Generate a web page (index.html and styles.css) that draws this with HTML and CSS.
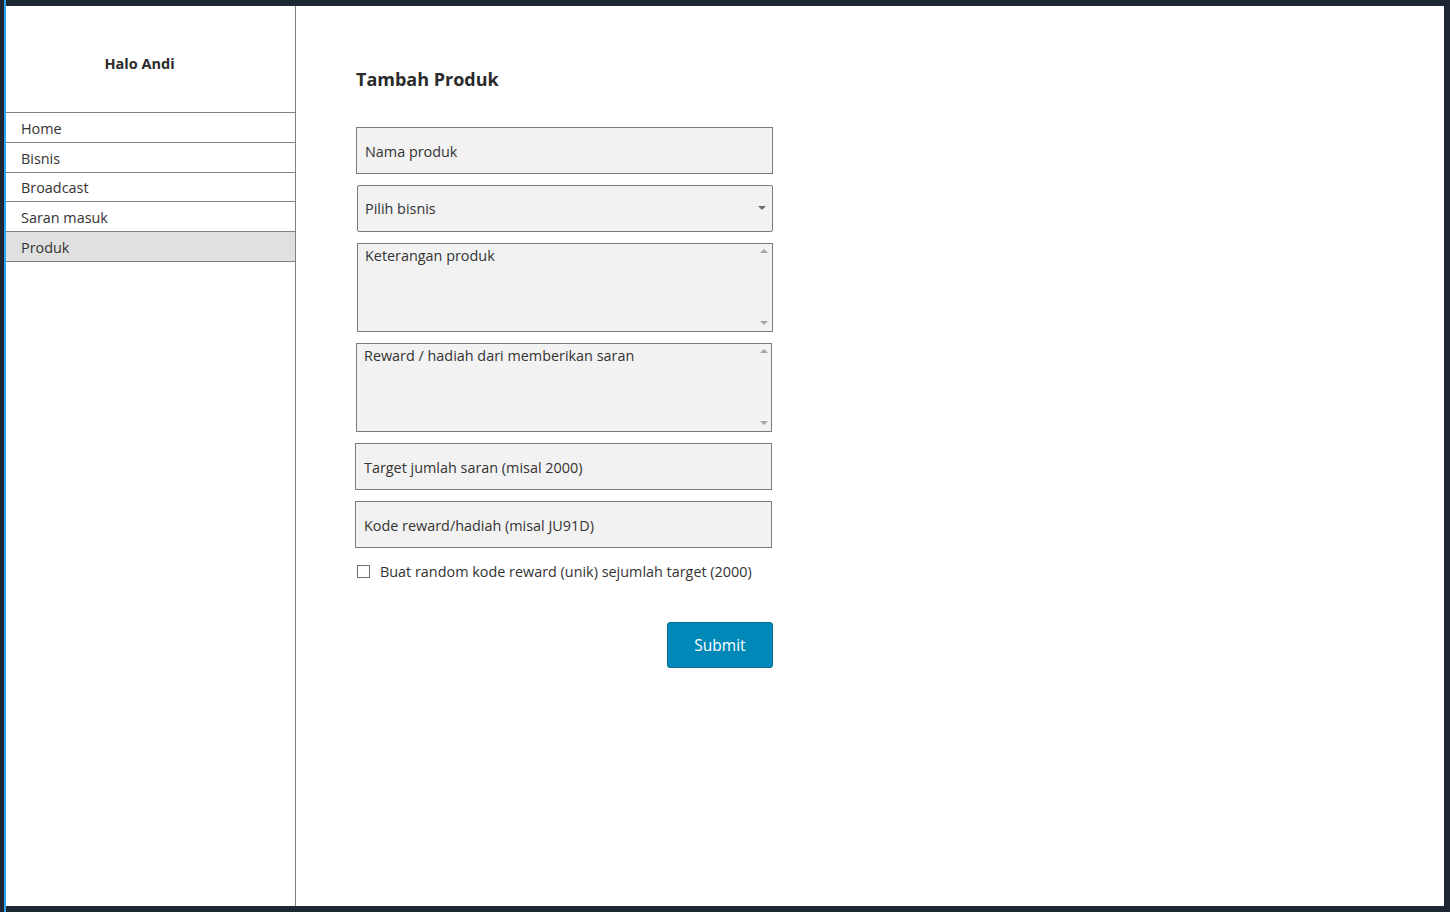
FILE: index.html
```html
<!DOCTYPE html>
<html lang="id">
<head>
<meta charset="utf-8">
<title>Tambah Produk</title>
<link rel="stylesheet" href="styles.css">
</head>
<body>
<div class="frame">
  <div class="accent"></div>
  <div class="viewport">
    <div class="app">
      <aside class="sidebar">
        <div class="sidebar-header">Halo Andi</div>
        <nav class="nav">
          <a class="nav-item" href="#">Home</a>
          <a class="nav-item" href="#">Bisnis</a>
          <a class="nav-item short" href="#">Broadcast</a>
          <a class="nav-item" href="#">Saran masuk</a>
          <a class="nav-item active" href="#">Produk</a>
        </nav>
      </aside>
      <main class="main">
        <h1 class="title">Tambah Produk</h1>
        <form class="form">
          <input class="field" type="text" placeholder="Nama produk">
          <div class="select-wrap">
            <select class="field select">
              <option>Pilih bisnis</option>
            </select>
          </div>
          <div class="ta-wrap">
            <textarea class="field textarea" placeholder="Keterangan produk"></textarea>
            <span class="sb-up"></span>
            <span class="sb-down"></span>
          </div>
          <div class="ta-wrap shift-left">
            <textarea class="field textarea" placeholder="Reward / hadiah dari memberikan saran"></textarea>
            <span class="sb-up"></span>
            <span class="sb-down"></span>
          </div>
          <input class="field shift-left2" type="text" placeholder="Target jumlah saran (misal 2000)">
          <input class="field shift-left2" type="text" placeholder="Kode reward/hadiah (misal JU91D)">
          <label class="check">
            <input type="checkbox" class="check-box">
            <span>Buat random kode reward (unik) sejumlah target (2000)</span>
          </label>
          <div class="actions">
            <button type="button" class="btn">Submit</button>
          </div>
        </form>
      </main>
    </div>
  </div>
</div>
</body>
</html>
```

FILE: styles.css
```css
* { box-sizing: border-box; }

html, body {
  margin: 0;
  padding: 0;
  height: 100%;
}

body {
  background: #1f2633;
  font-family: "Open Sans", "Noto Sans", sans-serif;
  color: #333;
  overflow: hidden;
}

.frame {
  display: flex;
  height: 100vh;
  padding-left: 4px;
}

.accent {
  width: 2px;
  background: #2aa6f2;
}

.viewport {
  flex: 1;
  padding: 6px 6px 6px 0;
}

.app {
  height: 100%;
  background: #fff;
  display: flex;
}

.sidebar {
  width: 290px;
  border-right: 1px solid #808080;
  flex-shrink: 0;
}

.sidebar-header {
  height: 107px;
  border-bottom: 1px solid #808080;
  display: flex;
  align-items: center;
  justify-content: center;
  padding: 8px 22px 0 0;
  font-weight: 700;
  font-size: 14.5px;
  color: #2b2b2b;
}

.nav {
  display: flex;
  flex-direction: column;
}

.nav-item {
  display: block;
  height: 30px;
  padding-top: 2px;
  line-height: 27px;
  border-bottom: 1px solid #808080;
  padding-left: 15px;
  font-size: 14.4px;
  color: #333;
  text-decoration: none;
}

.nav-item.short {
  height: 29px;
  line-height: 26px;
}

.nav-item.active {
  background: #e0e0e0;
}

.main {
  flex: 1;
  padding: 59px 0 0 60px;
}

.title {
  margin: 0;
  font-size: 18px;
  line-height: 28px;
  font-weight: 700;
  color: #2b2b2b;
}

.form {
  margin-top: 34px;
  width: 417px;
  display: flex;
  flex-direction: column;
  gap: 11px;
}

.field {
  display: block;
  width: 417px;
  height: 47px;
  margin: 0;
  border: 1px solid #7a7a7a;
  background: #f2f2f2;
  padding: 2px 8px 0;
  font-family: inherit;
  font-size: 14.4px;
  color: #333;
  outline: none;
  border-radius: 0;
}

.field::placeholder {
  color: #333;
  opacity: 1;
}

.select-wrap {
  position: relative;
  margin-left: 1px;
}

.select {
  width: 416px;
  appearance: none;
  -webkit-appearance: none;
  border-radius: 2px;
  padding: 0 8px 0 7px;
}

.select-wrap::after {
  content: "";
  position: absolute;
  right: 7px;
  top: 21px;
  border-left: 4px solid transparent;
  border-right: 4px solid transparent;
  border-top: 4px solid #6b6b6b;
}

.ta-wrap {
  position: relative;
  margin-left: 1px;
}

.ta-wrap.shift-left {
  margin-left: 0;
}

.textarea {
  width: 416px;
  height: 89px;
  resize: none;
  overflow: hidden;
  padding: 2px 24px 0 7px;
  line-height: 20px;
}

.sb-up,
.sb-down {
  position: absolute;
  right: 5px;
  width: 0;
  height: 0;
  border-left: 4px solid transparent;
  border-right: 4px solid transparent;
}

.sb-up {
  top: 6px;
  border-bottom: 4px solid #a6a6a6;
}

.sb-down {
  bottom: 7px;
  border-top: 4px solid #a6a6a6;
}

.shift-left2 {
  margin-left: -1px;
}

.check {
  display: flex;
  align-items: center;
  gap: 10px;
  margin-top: 3px;
  margin-left: 1px;
  font-size: 14.4px;
  color: #333;
}

.check-box {
  appearance: none;
  -webkit-appearance: none;
  width: 13px;
  height: 13px;
  margin: 0;
  border: 1px solid #6f6f6f;
  background: #fff;
}

.actions {
  display: flex;
  justify-content: flex-end;
  margin-top: 30px;
}

.btn {
  width: 106px;
  height: 46px;
  background: #0088b8;
  color: #fff;
  border: 1px solid #0a6f93;
  border-radius: 3px;
  font-family: inherit;
  font-size: 15.5px;
  font-weight: 500;
  cursor: pointer;
}
```
